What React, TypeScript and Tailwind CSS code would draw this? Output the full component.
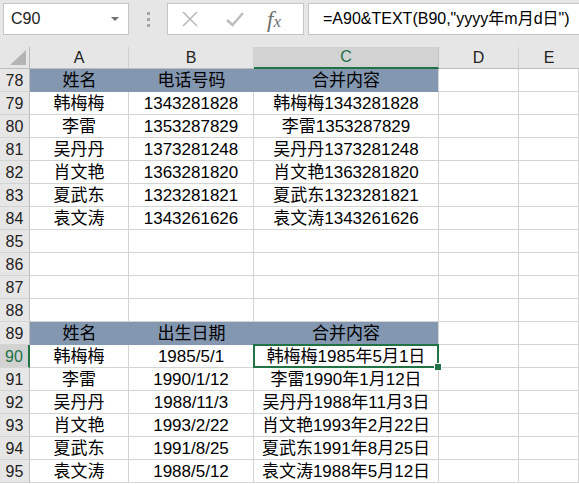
import React from 'react'

const font = "font-['Liberation_Sans','Noto_Sans_CJK_SC',sans-serif]"

type Row = { n: number; a?: string; b?: string; c?: string; head?: boolean }

const rows: Row[] = [
  { n: 78, a: '姓名', b: '电话号码', c: '合并内容', head: true },
  { n: 79, a: '韩梅梅', b: '1343281828', c: '韩梅梅1343281828' },
  { n: 80, a: '李雷', b: '1353287829', c: '李雷1353287829' },
  { n: 81, a: '吴丹丹', b: '1373281248', c: '吴丹丹1373281248' },
  { n: 82, a: '肖文艳', b: '1363281820', c: '肖文艳1363281820' },
  { n: 83, a: '夏武东', b: '1323281821', c: '夏武东1323281821' },
  { n: 84, a: '袁文涛', b: '1343261626', c: '袁文涛1343261626' },
  { n: 85 },
  { n: 86 },
  { n: 87 },
  { n: 88 },
  { n: 89, a: '姓名', b: '出生日期', c: '合并内容', head: true },
  { n: 90, a: '韩梅梅', b: '1985/5/1', c: '韩梅梅1985年5月1日' },
  { n: 91, a: '李雷', b: '1990/1/12', c: '李雷1990年1月12日' },
  { n: 92, a: '吴丹丹', b: '1988/11/3', c: '吴丹丹1988年11月3日' },
  { n: 93, a: '肖文艳', b: '1993/2/22', c: '肖文艳1993年2月22日' },
  { n: 94, a: '夏武东', b: '1991/8/25', c: '夏武东1991年8月25日' },
  { n: 95, a: '袁文涛', b: '1988/5/12', c: '袁文涛1988年5月12日' },
]

const cols = 'grid grid-cols-[30px_99px_125px_185px_80px_1fr]'

function Cell({ text, head, last, selected }: { text?: string; head?: boolean; last?: boolean; selected?: boolean }) {
  return (
    <div
      className={`relative h-[23px] flex items-end justify-center text-[17px] leading-[21px] text-black whitespace-nowrap ${
        head ? 'bg-[#8497b0] border-b border-b-[#8497b0]' : 'border-b border-[#d4d4d4]'
      } ${head && !last ? '' : 'border-r border-r-[#d4d4d4]'} ${selected ? 'z-10' : ''}`}
    >
      {text}
      {selected && (
        <div className="absolute -left-px -top-px -right-px -bottom-px border-2 border-[#217346]">
          <div className="absolute -right-[5px] -bottom-[5px] w-[8px] h-[8px] bg-[#217346] border border-white" />
        </div>
      )}
    </div>
  )
}

export default function App() {
  return (
    <div className={`w-[579px] h-[484px] overflow-hidden bg-white ${font}`}>
      {/* formula bar */}
      <div className="h-[47px] bg-[#e6e6e6] flex items-start pt-[3px] pl-[3px]">
        <div className="w-[126px] h-[32px] bg-white border border-[#c6c6c6] flex items-center justify-between pl-[7px] pr-[9px] text-[16px] text-[#222]">
          <span>C90</span>
          <span className="w-0 h-0 border-l-[4px] border-r-[4px] border-t-[4px] border-l-transparent border-r-transparent border-t-[#707070]" />
        </div>
        <div className="w-[38px] h-[32px] flex flex-col items-center justify-center gap-[3px]">
          <span className="w-[3px] h-[3px] bg-[#a6a6a6]" />
          <span className="w-[3px] h-[3px] bg-[#a6a6a6]" />
          <span className="w-[3px] h-[3px] bg-[#a6a6a6]" />
        </div>
        <div className="w-[137px] h-[32px] bg-white border border-[#c6c6c6] flex items-center">
          <svg width="20" height="20" viewBox="0 0 20 20" className="ml-[12px]">
            <path d="M3 3 L17 17 M17 3 L3 17" stroke="#b9b9b9" strokeWidth="1.6" fill="none" />
          </svg>
          <svg width="20" height="20" viewBox="0 0 20 20" className="ml-[25px]">
            <path d="M2 11 L7.5 16 L18 4" stroke="#bcbcbc" strokeWidth="2.4" fill="none" />
          </svg>
          <span className="ml-[22px] text-[23px] italic text-[#6e6e6e] font-['Liberation_Serif',serif] leading-none">
            f<span className="text-[17px]">x</span>
          </span>
        </div>
        <div className="ml-[4px] flex-1 h-[32px] bg-white border border-[#c6c6c6] border-r-0 flex items-center pl-[14px] text-[16px] text-black whitespace-nowrap">
          =A90&amp;TEXT(B90,"yyyy年m月d日")
        </div>
      </div>

      {/* column headers */}
      <div className={`${cols} h-[22px] bg-[#e6e6e6] text-[16px] text-[#222]`}>
        <div className="relative border-r border-[#bdbdbd] border-b border-b-[#bdbdbd]">
          <svg width="16" height="15" viewBox="0 0 16 15" className="absolute right-[3px] bottom-[3px]">
            <polygon points="16,0 16,15 0,15" fill="#b4b4b4" />
          </svg>
        </div>
        <div className="flex items-end justify-center leading-[21px] border-r border-[#d0d0d0] border-b border-b-[#bdbdbd]">A</div>
        <div className="flex items-end justify-center leading-[21px] border-r border-[#d0d0d0] border-b border-b-[#bdbdbd]">B</div>
        <div className="flex items-end justify-center leading-[20px] bg-[#d2d2d2] text-[#217346] border-r border-[#bdbdbd] border-b-2 border-b-[#217346]">C</div>
        <div className="flex items-end justify-center leading-[21px] border-r border-[#d0d0d0] border-b border-b-[#bdbdbd]">D</div>
        <div className="flex items-end justify-center leading-[21px] border-b border-b-[#bdbdbd]">E</div>
      </div>

      {/* sheet body */}
      {rows.map((r) => {
        const sel = r.n === 90
        return (
          <div key={r.n} className={cols}>
            <div
              className={`h-[23px] flex items-end justify-center text-[16px] leading-[21px] border-b border-[#d4d4d4] ${
                sel
                  ? 'bg-[#d2d2d2] text-[#217346] border-r-2 border-r-[#217346]'
                  : 'bg-[#e6e6e6] text-[#222] border-r border-r-[#bdbdbd]'
              }`}
            >
              {r.n}
            </div>
            <Cell text={r.a} head={r.head} />
            <Cell text={r.b} head={r.head} />
            <Cell text={r.c} head={r.head} last selected={sel} />
            <Cell />
            <Cell />
          </div>
        )
      })}
    </div>
  )
}
